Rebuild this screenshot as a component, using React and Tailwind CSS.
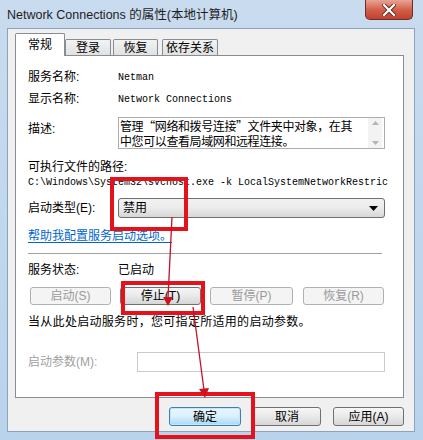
import React from 'react'

const cjk = "font-['Liberation_Sans','Noto_Sans_CJK_SC',sans-serif]"
const cjkFirst = "font-['Noto_Sans_CJK_SC',sans-serif]"
const mono = "font-['Liberation_Mono','Noto_Sans_CJK_SC',monospace]"

function WinButton({ children, disabled, primary, className = '' }) {
  const base = 'flex items-center justify-center rounded-[3px] border text-[12px] leading-none'
  let look = 'border-[#707070] bg-gradient-to-b from-[#f6f6f6] via-[#e9e9e9] to-[#d6d6d6] text-black'
  if (disabled) look = 'border-[#adb2b5] bg-[#f4f4f4] text-[#9a9a9a]'
  if (primary) look = 'border-[#3c7fb1] bg-gradient-to-b from-[#eaf6fd] via-[#d9f0fc] to-[#a7d9f5] text-black shadow-[inset_0_0_0_1px_#c6e6f8]'
  return <div className={`${base} ${look} ${className}`}>{children}</div>
}

function Tab({ label, active, width }) {
  if (active) {
    return (
      <div
        className={`relative z-10 -mb-px h-[23px] ${width} bg-white border border-[#898c95] border-b-0 rounded-t-[2px] flex items-start justify-center pt-[4px] text-[12px] leading-[14px]`}
      >
        {label}
      </div>
    )
  }
  return (
    <div
      className={`h-[16px] ${width} bg-gradient-to-b from-[#f3f3f3] to-[#e1e1e1] border border-[#898c95] border-b-0 rounded-t-[2px] flex items-center justify-center text-[12px] leading-none`}
    >
      {label}
    </div>
  )
}

function Row({ label, children, className = '' }) {
  return (
    <div className={`flex items-center pl-[12px] ${className}`}>
      <div className="w-[90px] text-[12px] leading-none">{label}</div>
      {children}
    </div>
  )
}

export default function App() {
  return (
    <div className={`relative w-[423px] h-[440px] overflow-hidden bg-gradient-to-b from-[#c9dbee] to-[#b9d3ec] ${cjk} text-black`}>
      {/* title bar */}
      <div className="relative h-[28px] pl-[7px] pt-[8px] text-[12.5px] leading-[15px] text-[#1e1e1e]">
        Network Connections 的属性(本地计算机)
        <div className="absolute top-0 right-[10px] w-[48px] h-[20px] rounded-b-[5px] border border-t-0 border-[#6b2f27] bg-gradient-to-b from-[#e6a495] via-[#d2614c] to-[#c0402b] flex items-center justify-center">
          <svg width="14" height="12" viewBox="0 0 14 12">
            <path d="M2 1 L12 11 M12 1 L2 11" stroke="#5b2a22" strokeWidth="4" strokeLinecap="square" />
            <path d="M2 1 L12 11 M12 1 L2 11" stroke="#ffffff" strokeWidth="2.2" strokeLinecap="square" />
          </svg>
        </div>
      </div>

      {/* client area */}
      <div className="mx-[7px] mr-[8px] h-[404px] border border-[#8ba3bd] bg-[#f0f0f0] flex flex-col">
        {/* tabs */}
        <div className="h-[26px] pl-[7px] flex items-end">
          <Tab label="常规" active width="w-[50px]" />
          <Tab label="登录" width="w-[46px]" />
          <div className="w-[2px]" />
          <Tab label="恢复" width="w-[45px]" />
          <div className="w-[4px]" />
          <Tab label="依存关系" width="w-[56px]" />
        </div>

        {/* panel */}
        <div className="mx-[7px] mr-[10px] h-[343px] bg-white border border-[#898c95] flex flex-col">
          <Row label="服务名称:" className="mt-[10px] h-[22px]">
            <span className={`${mono} text-[10px]`}>Netman</span>
          </Row>
          <Row label="显示名称:" className="h-[22px]">
            <span className={`${mono} text-[10px]`}>Network Connections</span>
          </Row>

          <div className="mt-[7px] flex pl-[12px]">
            <div className="w-[90px] pt-[6px] text-[12px] leading-none">描述:</div>
            <div className="w-[267px] h-[32px] border border-[#abadb3] flex">
              <div className={`flex-1 pl-[1px] ${cjkFirst} text-[12px] tracking-[-0.4px] whitespace-nowrap`}>
                <div className="h-[15px] leading-[15px]">管理“网络和拨号连接”文件夹中对象，在其</div>
                <div className="h-[15px] leading-[15px]">中您可以查看局域网和远程连接。</div>
              </div>
              <div className="w-[14px] mr-[2px] bg-[#f3f3f3] flex flex-col items-center justify-between py-[3px]">
                <svg width="7" height="4" viewBox="0 0 7 4"><path d="M0 4 L3.5 0 L7 4 Z" fill="#b4b4b4" /></svg>
                <svg width="7" height="4" viewBox="0 0 7 4"><path d="M0 0 L3.5 4 L7 0 Z" fill="#b4b4b4" /></svg>
              </div>
            </div>
          </div>

          <div className="mt-[11px] h-[14px] pl-[12px] text-[12px] leading-[14px]">可执行文件的路径:</div>
          <div className={`mt-[2px] h-[14px] pl-[12px] ${mono} text-[10px] leading-[14px] whitespace-nowrap overflow-hidden w-[374px]`}>
            C:\Windows\System32\svchost.exe -k LocalSystemNetworkRestric
          </div>

          <Row label="启动类型(E):" className="mt-[8px] h-[20px]">
            <div className="w-[267px] h-[20px] rounded-[3px] border border-[#707070] bg-gradient-to-b from-[#f2f2f2] via-[#ebebeb] to-[#d7d7d7] flex items-center pl-[4px] pr-[6px]">
              <span className="flex-1 text-[12px] leading-none">禁用</span>
              <svg width="9" height="5" viewBox="0 0 9 5"><path d="M0 0 L9 0 L4.5 5 Z" fill="#000" /></svg>
            </div>
          </Row>

          <div className="mt-[10px] h-[16px] pl-[12px] flex items-center">
            <span className="text-[12px] leading-none text-[#0066cc] underline underline-offset-2">帮助我配置服务启动选项。</span>
          </div>

          <div className="mt-[9px] ml-[12px] w-[354px] h-px bg-[#a0a0a0]" />

          <Row label="服务状态:" className="mt-[8px] h-[16px]">
            <span className="text-[12px] leading-none">已启动</span>
          </Row>

          <div className="mt-[9px] h-[18px] pl-[14px] flex gap-[9px]">
            <WinButton disabled className="w-[81px]">启动(S)</WinButton>
            <WinButton className="w-[81px]">停止(T)</WinButton>
            <WinButton disabled className="w-[83px]">暂停(P)</WinButton>
            <WinButton disabled className="w-[81px] ml-[1px]">恢复(R)</WinButton>
          </div>

          <div className="mt-[9px] h-[16px] pl-[12px] flex items-center text-[12px] leading-none tracking-[0.3px]">
            当从此处启动服务时，您可指定所适用的启动参数。
          </div>

          <div className="mt-[22px] h-[20px] pl-[12px] flex items-center">
            <div className="w-[109px] text-[12px] leading-none text-[#a0a0a0]">启动参数(M):</div>
            <div className="w-[248px] h-[20px] border border-[#c9cbce] bg-white" />
          </div>
        </div>

        {/* dialog buttons */}
        <div className="mt-[9px] h-[19px] pr-[10px] flex justify-end gap-[12px]">
          <WinButton primary className="w-[72px]">确定</WinButton>
          <WinButton className="w-[68px]">取消</WinButton>
          <WinButton className="w-[71px]">应用(A)</WinButton>
        </div>
      </div>

      {/* red annotation overlay */}
      <div className="absolute left-[110px] top-[177px] w-[78px] h-[54px] border-4 border-[#e3121c] pointer-events-none" />
      <div className="absolute left-[121px] top-[281px] w-[84px] h-[34px] border-4 border-[#e3121c] pointer-events-none" />
      <div className="absolute left-[155px] top-[392px] w-[100px] h-[47px] border-4 border-[#e3121c] pointer-events-none" />
      <svg className="absolute inset-0 pointer-events-none" width="423" height="440" viewBox="0 0 423 440">
        <path d="M172 217 L168 298" stroke="#c4102a" strokeWidth="1.3" fill="none" />
        <path d="M163 297 L173 297 L168 306 Z" fill="#d0121e" />
        <path d="M193 307 L204 390" stroke="#c4102a" strokeWidth="1.3" fill="none" />
        <path d="M199 389 L209 388 L205 398 Z" fill="#d0121e" />
      </svg>
    </div>
  )
}
